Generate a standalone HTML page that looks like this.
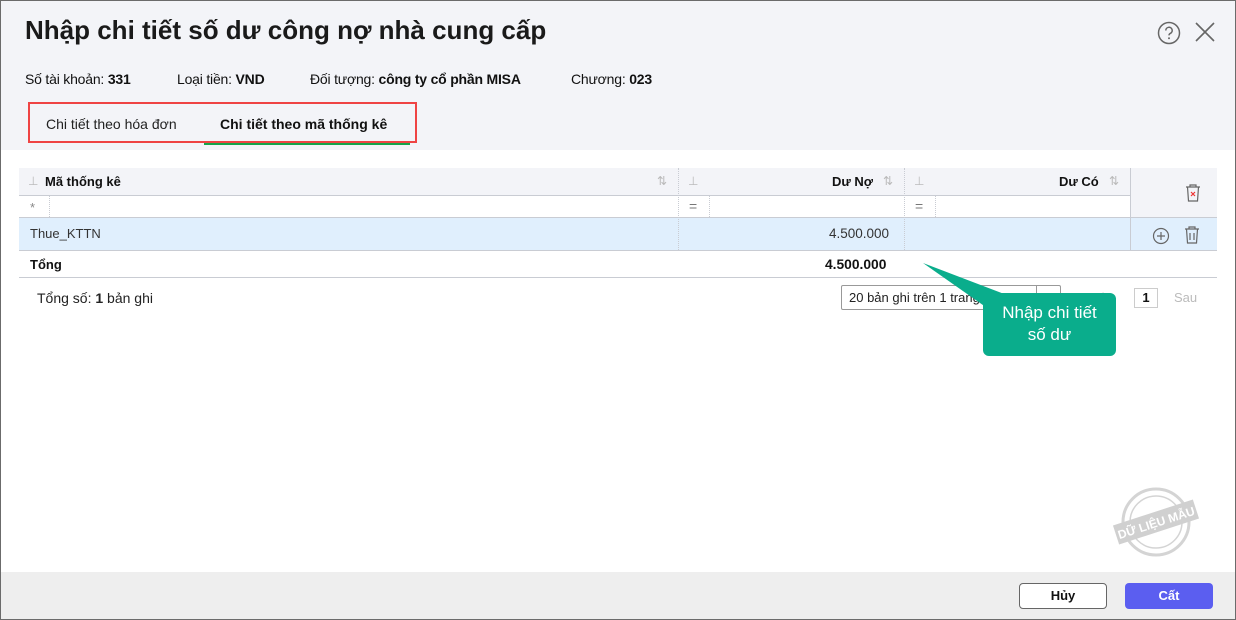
<!DOCTYPE html>
<html><head><meta charset="utf-8"><style>
*{box-sizing:border-box;margin:0;padding:0}
body{width:1236px;height:620px;overflow:hidden;font-family:"Liberation Sans",sans-serif;font-size:13px;color:#111;position:relative;background:#fff}
.a{position:absolute}
.frame{left:0;top:0;width:1236px;height:620px;border:1px solid #6b6b6b;pointer-events:none;z-index:10}
.hdr{left:0;top:0;width:1236px;height:150px;background:#f3f4f8}
.ftr{left:0;top:572px;width:1236px;height:48px;background:#eeeeee}
b{font-weight:bold}
.line{background:#c9ccd3;height:1px}
</style></head><body>
<div class="a hdr"></div>
<div class="a" style="left:25px;top:15px;font-size:26px;font-weight:bold;color:#1a1a1a">Nhập chi tiết số dư công nợ nhà cung cấp</div>
<svg class="a" style="left:1157px;top:21px" width="24" height="24" viewBox="0 0 24 24"><circle cx="12" cy="12" r="10.5" fill="none" stroke="#666" stroke-width="1.5"/><path d="M8.8 9.5a3.2 3.2 0 1 1 4.5 2.9c-.9.5-1.3 1-1.3 2" fill="none" stroke="#666" stroke-width="1.5"/><circle cx="12" cy="17.3" r="1" fill="#666"/></svg>
<svg class="a" style="left:1194px;top:21px" width="22" height="22" viewBox="0 0 22 22"><path d="M2 2L20 20M20 2L2 20" stroke="#666" stroke-width="1.6"/></svg>
<div class="a" style="left:25px;top:71px;font-size:14px;letter-spacing:-0.2px">Số tài khoản: <b>331</b></div>
<div class="a" style="left:177px;top:71px;font-size:14px;letter-spacing:-0.2px">Loại tiền: <b>VND</b></div>
<div class="a" style="left:310px;top:71px;font-size:14px;letter-spacing:-0.2px">Đối tượng: <b>công ty cổ phần MISA</b></div>
<div class="a" style="left:571px;top:71px;font-size:14px;letter-spacing:-0.2px">Chương: <b>023</b></div>
<div class="a" style="left:28px;top:102px;width:389px;height:41px;border:2px solid #ef4444"></div>
<div class="a" style="left:46px;top:116px;font-size:14px;color:#222">Chi tiết theo hóa đơn</div>
<div class="a" style="left:220px;top:116px;font-size:14px;font-weight:bold">Chi tiết theo mã thống kê</div>
<div class="a" style="left:204px;top:143px;width:206px;height:2px;background:#16a34a"></div>

<div class="a" style="left:19px;top:168px;width:1198px;height:28px;background:#f3f4f8"></div>
<div class="a" style="left:1131px;top:168px;width:86px;height:49px;background:#f3f4f8"></div>
<div class="a line" style="left:19px;top:195px;width:1112px"></div>
<div class="a line" style="left:19px;top:217px;width:1198px"></div>
<div class="a" style="left:19px;top:218px;width:1198px;height:32px;background:#e0effd"></div>
<div class="a line" style="left:19px;top:250px;width:1198px"></div>
<div class="a line" style="left:19px;top:277px;width:1198px"></div>
<div class="a" style="left:678px;top:168px;width:1px;height:82px;border-left:1px dotted #c9ccd3"></div>
<div class="a" style="left:904px;top:168px;width:1px;height:82px;border-left:1px dotted #c9ccd3"></div>
<div class="a" style="left:1130px;top:168px;width:1px;height:82px;border-left:1px solid #c9ccd3"></div>
<div class="a" style="left:49px;top:196px;height:21px;border-left:1px dotted #c9ccd3"></div>
<div class="a" style="left:709px;top:196px;height:21px;border-left:1px dotted #c9ccd3"></div>
<div class="a" style="left:935px;top:196px;height:21px;border-left:1px dotted #c9ccd3"></div>
<div class="a" style="left:28px;top:174px;color:#bbb;font-size:12px">⊥</div>
<div class="a" style="left:45px;top:174px;font-weight:bold">Mã thống kê</div>
<div class="a" style="left:657px;top:174px;color:#bbb;font-size:12px">⇅</div>
<div class="a" style="left:688px;top:174px;color:#bbb;font-size:12px">⊥</div>
<div class="a" style="left:832px;top:174px;font-weight:bold">Dư Nợ</div>
<div class="a" style="left:883px;top:174px;color:#bbb;font-size:12px">⇅</div>
<div class="a" style="left:914px;top:174px;color:#bbb;font-size:12px">⊥</div>
<div class="a" style="left:1059px;top:174px;font-weight:bold">Dư Có</div>
<div class="a" style="left:1109px;top:174px;color:#bbb;font-size:12px">⇅</div>
<div class="a" style="left:30px;top:200px;color:#888">*</div>
<div class="a" style="left:689px;top:198px;color:#777;font-size:14px">=</div>
<div class="a" style="left:915px;top:198px;color:#777;font-size:14px">=</div>
<svg class="a" style="left:1185px;top:184px" width="16" height="18" viewBox="0 0 16 18"><path d="M1 3h14M5 3V1h6v2M2.5 3l1 14h9l1-14" fill="none" stroke="#666" stroke-width="1.2"/><path d="M6 8l4 4M10 8l-4 4" stroke="#e33" stroke-width="1.2"/></svg>
<div class="a" style="left:30px;top:226px;color:#333">Thue_KTTN</div>
<div class="a" style="left:829px;top:226px;color:#333;font-size:13.5px">4.500.000</div>
<svg class="a" style="left:1152px;top:227px" width="18" height="18" viewBox="0 0 18 18"><circle cx="9" cy="9" r="7.5" fill="none" stroke="#666" stroke-width="1.2"/><path d="M9 5v8M5 9h8" stroke="#666" stroke-width="1.2"/></svg>
<svg class="a" style="left:1184px;top:226px" width="16" height="18" viewBox="0 0 16 18"><path d="M1 3h14M5 3V1h6v2M2.5 3l1 14h9l1-14M6 7v7M10 7v7" fill="none" stroke="#666" stroke-width="1.2"/></svg>
<div class="a" style="left:30px;top:257px;font-weight:bold">Tổng</div>
<div class="a" style="left:825px;top:257px;font-weight:bold;font-size:13.8px">4.500.000</div>
<div class="a" style="left:37px;top:290px;font-size:14px;color:#222">Tổng số: <b>1</b> bản ghi</div>
<div class="a" style="left:841px;top:285px;width:220px;height:25px;border:1px solid #999;border-radius:2px"></div>
<div class="a" style="left:1036px;top:285px;height:25px;border-left:1px solid #999"></div>
<div class="a" style="left:849px;top:290px;color:#222">20 bản ghi trên 1 trang</div>
<div class="a" style="left:1078px;top:290px;color:#ccc">Trước</div>
<div class="a" style="left:1134px;top:288px;width:24px;height:20px;border:1px solid #ccc;text-align:center;line-height:18px;font-weight:bold">1</div>
<div class="a" style="left:1174px;top:290px;color:#bbb">Sau</div>
<svg class="a" style="left:920px;top:260px" width="100" height="50" viewBox="0 0 100 50"><path d="M3 3L100 40L70 50Z" fill="#0aad8c"/></svg>
<div class="a" style="left:983px;top:293px;width:133px;height:63px;background:#0aad8c;border-radius:6px;color:#fff;font-size:17px;text-align:center;line-height:22px;padding-top:9px">Nhập chi tiết<br>số dư</div>
<svg class="a" style="left:1110px;top:483px" width="92" height="78" viewBox="0 0 92 78"><circle cx="46" cy="39" r="33" fill="none" stroke="#d4d4d4" stroke-width="3"/><circle cx="46" cy="39" r="26" fill="none" stroke="#d4d4d4" stroke-width="1.5"/><g transform="rotate(-18 46 39)"><rect x="4" y="29" width="84" height="20" fill="#d0d0d0"/><text x="46" y="44" fill="#fff" font-family="Liberation Sans" font-weight="bold" font-size="12" text-anchor="middle">DỮ LIỆU MẪU</text></g></svg>
<div class="a ftr"></div>
<div class="a" style="left:1019px;top:583px;width:88px;height:26px;border:1px solid #666;border-radius:4px;background:#fff;text-align:center;line-height:24px;font-weight:bold">Hủy</div>
<div class="a" style="left:1125px;top:583px;width:88px;height:26px;border-radius:4px;background:#5b5ef0;color:#fff;text-align:center;line-height:26px;font-weight:bold">Cất</div>
<div class="a frame"></div>
</body></html>
